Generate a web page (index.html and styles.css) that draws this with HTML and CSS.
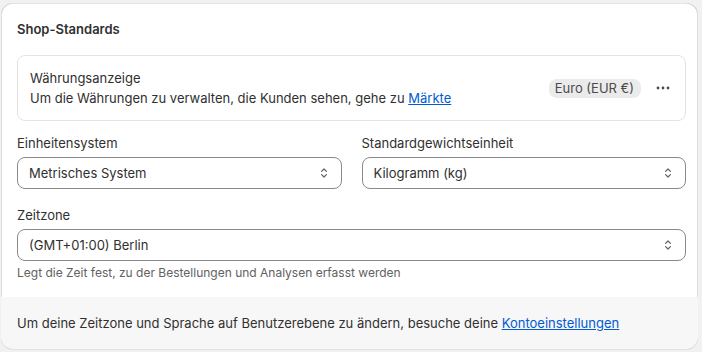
FILE: index.html
```html
<!DOCTYPE html>
<html lang="de">
<head>
<meta charset="utf-8">
<link rel="stylesheet" href="styles.css">
</head>
<body>
<div class="card">
  <div class="body">
    <h2 class="title">Shop-Standards</h2>
    <div class="box">
      <div class="box-text">
        <div class="box-title">Währungsanzeige</div>
        <div class="box-desc">Um die Währungen zu verwalten, die Kunden sehen, gehe zu <a href="#">Märkte</a></div>
      </div>
      <span class="badge">Euro (EUR €)</span>
      <button class="more" aria-label="Mehr">
        <svg viewBox="0 0 20 20" width="20" height="20"><circle cx="5" cy="10" r="1.4" fill="#4a4a4a"/><circle cx="10" cy="10" r="1.4" fill="#4a4a4a"/><circle cx="15" cy="10" r="1.4" fill="#4a4a4a"/></svg>
      </button>
    </div>
    <div class="grid">
      <div class="field">
        <label class="label">Einheitensystem</label>
        <div class="select"><span>Metrisches System</span>
          <svg class="chev" viewBox="0 0 20 20" width="16" height="16"><path d="M7 8l3-3 3 3M7 12l3 3 3-3" fill="none" stroke="#616161" stroke-width="1.5" stroke-linecap="round" stroke-linejoin="round"/></svg>
        </div>
      </div>
      <div class="field">
        <label class="label">Standardgewichtseinheit</label>
        <div class="select"><span>Kilogramm (kg)</span>
          <svg class="chev" viewBox="0 0 20 20" width="16" height="16"><path d="M7 8l3-3 3 3M7 12l3 3 3-3" fill="none" stroke="#616161" stroke-width="1.5" stroke-linecap="round" stroke-linejoin="round"/></svg>
        </div>
      </div>
    </div>
    <div class="field zone">
      <label class="label">Zeitzone</label>
      <div class="select"><span>(GMT+01:00) Berlin</span>
        <svg class="chev" viewBox="0 0 20 20" width="16" height="16"><path d="M7 8l3-3 3 3M7 12l3 3 3-3" fill="none" stroke="#616161" stroke-width="1.5" stroke-linecap="round" stroke-linejoin="round"/></svg>
      </div>
      <div class="help">Legt die Zeit fest, zu der Bestellungen und Analysen erfasst werden</div>
    </div>
  </div>
  <div class="footer">Um deine Zeitzone und Sprache auf Benutzerebene zu ändern, besuche deine <a href="#">Kontoeinstellungen</a></div>
</div>
</body>
</html>
```

FILE: styles.css
```css
* { box-sizing: border-box; }
html, body { margin: 0; background: #f1f1f1; }
body {
  padding: 3px 4px 4px 1px;
  font-family: Inter, "Noto Sans", "Liberation Sans", sans-serif;
  font-size: 13px;
  line-height: 20px;
  color: #303030;
}
.card {
  width: 697px;
  background: #fff;
  border-radius: 12px;
  overflow: hidden;
  box-shadow: 0 1px 0 0 rgba(26,26,26,0.07),
    inset 1px 0 0 0 rgba(0,0,0,0.13),
    inset -1px 0 0 0 rgba(0,0,0,0.13),
    inset 0 -1px 0 0 rgba(0,0,0,0.17),
    inset 0 1px 0 0 rgba(204,204,204,0.5);
}
.body { padding: 16px 12px 16px 16px; }
.title { margin: 0; font-size: 13px; line-height: 20px; font-weight: 600; }
.box {
  margin-top: 16px;
  border: 1px solid #e3e3e3;
  border-radius: 8px;
  padding: 12px;
  display: flex;
  align-items: center;
}
.box-text { flex: 1; }
.box-desc { color: #303030; }
a { color: #005bd3; text-decoration: underline; }
.badge {
  background: #ebebeb;
  color: #4a4a4a;
  border-radius: 8px;
  padding: 0 7px 0 6px;
  line-height: 19px;
  height: 19px;
  font-size: 13px;
}
.more {
  margin-left: 12px;
  width: 20px; height: 20px;
  border: 0; background: none; padding: 0;
  display: flex; align-items: center; justify-content: center;
}
.grid {
  margin-top: 12px;
  display: grid;
  grid-template-columns: 1fr 1fr;
  gap: 20px;
}
.field { display: flex; flex-direction: column; }
.label { line-height: 20px; margin-bottom: 4px; }
.select {
  height: 32px;
  border: 1px solid #8a8a8a;
  border-radius: 8px;
  padding: 0 9px 0 11px;
  display: flex;
  align-items: center;
  justify-content: space-between;
}
.zone { margin-top: 16px; }
.help { margin-top: 4px; color: #616161; font-size: 12px; line-height: 16px; }
.footer {
  background: #f7f7f7;
  padding: 16px 12px 16px 16px;
  line-height: 20px;
}
```
